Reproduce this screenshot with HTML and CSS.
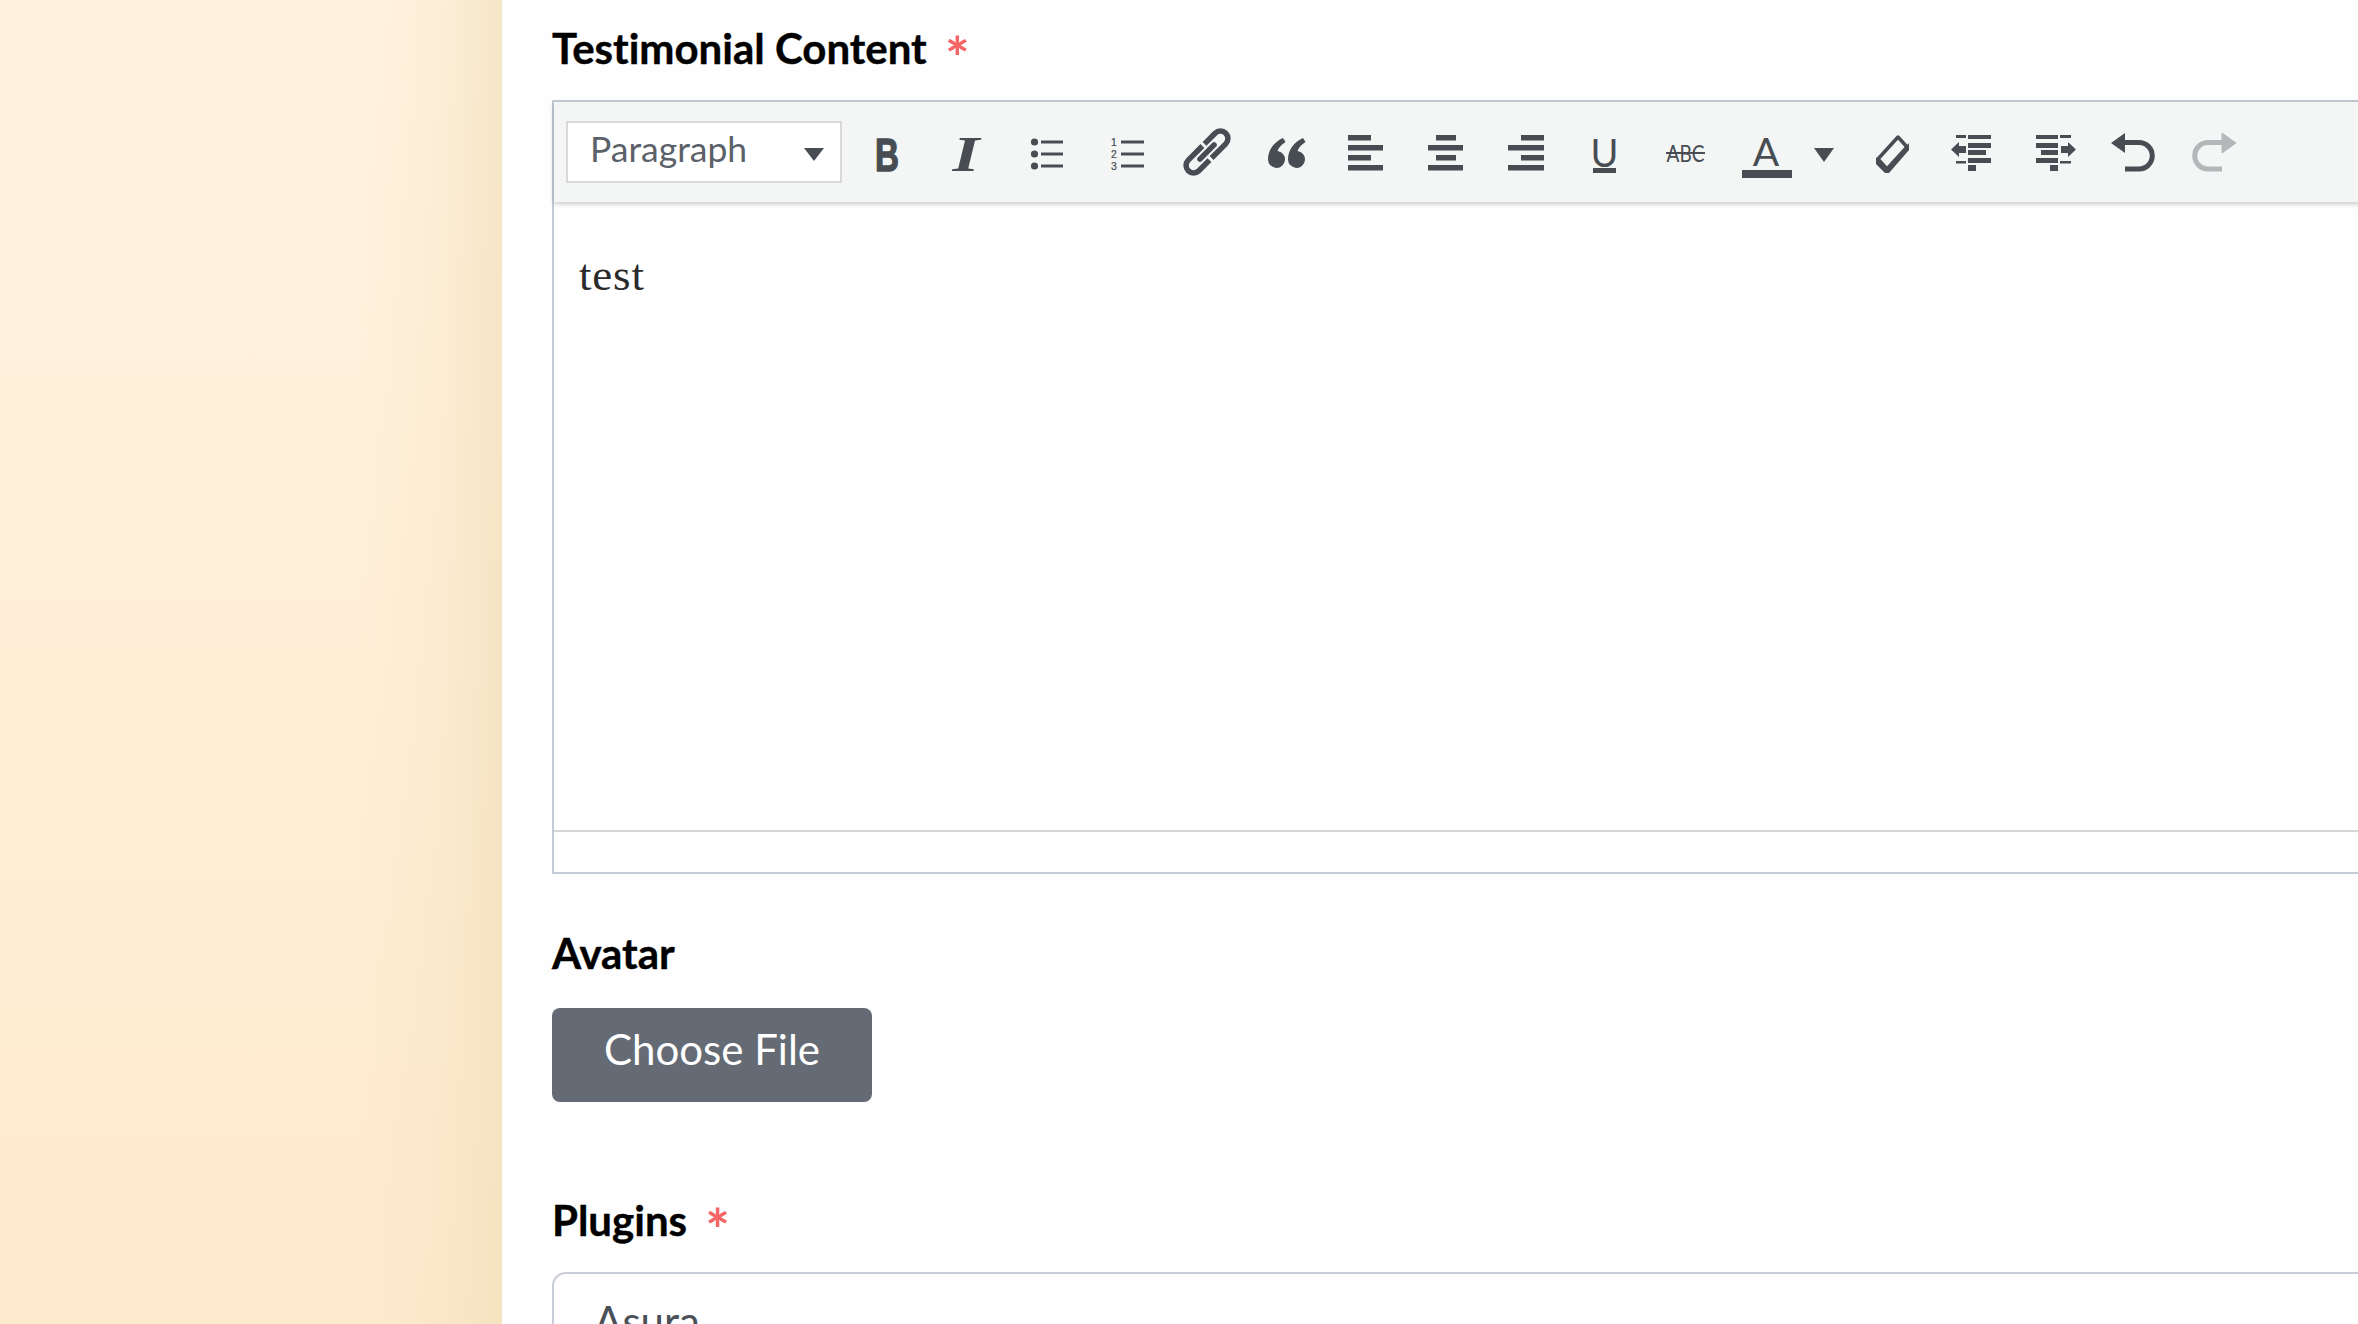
FILE: index.html
```html
<!DOCTYPE html>
<html>
<head>
    <meta charset="utf-8" />

    <title>Testimonial</title>

    <link rel="stylesheet" href="styles.css">
</head>
<body>
    <aside class="sidebar"></aside>

    <main class="content">
        <form class="form">
            <div class="field field-content">
                <label class="label">Testimonial Content <span class="req">*</span></label>

                <div class="editor">
                    <div class="toolbar">
                        <div class="format-select">
                            <span class="format-name">Paragraph</span>
                            <i class="caret"></i>
                        </div>

                        <button type="button" class="tool">
                            <svg viewBox="0 0 80 60"><text class="ico-b" x="40" y="49" text-anchor="middle" textLength="24" lengthAdjust="spacingAndGlyphs">B</text></svg>
                        </button>
                        <button type="button" class="tool">
                            <svg viewBox="0 0 80 60"><text class="ico-i" x="39" y="49" text-anchor="middle" textLength="27" lengthAdjust="spacingAndGlyphs">I</text></svg>
                        </button>
                        <button type="button" class="tool">
                            <svg viewBox="0 0 80 60">
                                <circle cx="27.5" cy="20" r="3.6"/><circle cx="27.5" cy="32" r="3.6"/><circle cx="27.5" cy="44" r="3.6"/>
                                <rect x="34" y="18.5" width="22" height="3"/><rect x="34" y="30.5" width="22" height="3"/><rect x="34" y="42.5" width="22" height="3"/>
                            </svg>
                        </button>
                        <button type="button" class="tool">
                            <svg viewBox="0 0 80 60">
                                <text class="ico-num" x="27" y="24" text-anchor="middle">1</text><text class="ico-num" x="27" y="36" text-anchor="middle">2</text><text class="ico-num" x="27" y="48" text-anchor="middle">3</text>
                                <rect x="34" y="18.5" width="23" height="3"/><rect x="34" y="30.5" width="23" height="3"/><rect x="34" y="42.5" width="23" height="3"/>
                            </svg>
                        </button>
                        <button type="button" class="tool">
                            <svg viewBox="0 0 80 60">
                                <g transform="rotate(-45 40 30)" class="line line-link">
                                    <path d="M41 22.5H21a7.5 7.5 0 0 0 0 15H36"/>
                                    <path d="M39 37.5H59a7.5 7.5 0 0 0 0-15H44"/>
                                    <path d="M30 30H50" stroke-linecap="round"/>
                                </g>
                            </svg>
                        </button>
                        <button type="button" class="tool">
                            <svg viewBox="0 0 80 60">
                                <path d="M36 16l2.5 4C34 23 31.500 26 30.500 29A8.500 8.500 0 1 1 21 37.500C21 28 27 20 36 16z"/>
                                <path d="M56 16l2.500 4C54 23 51.500 26 50.500 29A8.500 8.500 0 1 1 41 37.500C41 28 47 20 56 16z"/>
                            </svg>
                        </button>
                        <button type="button" class="tool">
                            <svg viewBox="0 0 80 60">
                                <rect x="21" y="13" width="23" height="5.500"/><rect x="21" y="23" width="35" height="5.500"/><rect x="21" y="33" width="23" height="5.500"/><rect x="21" y="43" width="35" height="5.500"/>
                            </svg>
                        </button>
                        <button type="button" class="tool">
                            <svg viewBox="0 0 80 60">
                                <rect x="29" y="13" width="20" height="5.500"/><rect x="21" y="23" width="35" height="5.500"/><rect x="29" y="33" width="20" height="5.500"/><rect x="21" y="43" width="35" height="5.500"/>
                            </svg>
                        </button>
                        <button type="button" class="tool">
                            <svg viewBox="0 0 80 60">
                                <rect x="34" y="13" width="23" height="5.500"/><rect x="21" y="23" width="36" height="5.500"/><rect x="34" y="33" width="23" height="5.500"/><rect x="21" y="43" width="36" height="5.500"/>
                            </svg>
                        </button>
                        <button type="button" class="tool">
                            <svg viewBox="0 0 80 60">
                                <text class="ico-u" x="37.500" y="45" text-anchor="middle">U</text>
                                <rect x="26" y="46" width="23" height="5"/>
                            </svg>
                        </button>
                        <button type="button" class="tool">
                            <svg viewBox="0 0 80 60">
                                <text class="ico-abc" x="38.500" y="40" text-anchor="middle" textLength="38" lengthAdjust="spacingAndGlyphs">ABC</text>
                                <rect x="19" y="30" width="39" height="2"/>
                            </svg>
                        </button>
                        <button type="button" class="tool">
                            <svg viewBox="0 0 80 60">
                                <text class="ico-a" x="39" y="44" text-anchor="middle">A</text>
                                <rect x="15" y="48" width="50" height="8"/>
                            </svg>
                        </button>
                        <button type="button" class="tool tool-caret">
                            <svg viewBox="0 0 45 60"><path d="M7 26H27L17 40z"/></svg>
                        </button>
                        <button type="button" class="tool">
                            <svg viewBox="0 0 80 60">
                                <path class="eraser" d="M46 15L55 25 35 47 26 37z"/>
                                <path d="M24 35l0 7 9 9 4 0 20-23 0-7-23 26z"/>
                            </svg>
                        </button>
                        <button type="button" class="tool">
                            <svg viewBox="0 0 80 60">
                                <rect x="24" y="13" width="10" height="3"/><rect x="36" y="13" width="23" height="4"/><rect x="36" y="21" width="23" height="5"/><rect x="36" y="28" width="18" height="5"/><rect x="36" y="36" width="23" height="5"/><rect x="24" y="39" width="10" height="2.500"/><rect x="36" y="43" width="8" height="6"/>
                                <path d="M19 27.500L27 20V24H34V31H27V35z"/>
                            </svg>
                        </button>
                        <button type="button" class="tool">
                            <svg viewBox="0 0 80 60">
                                <rect x="24" y="13" width="22" height="4"/><rect x="48" y="13" width="11" height="3"/><rect x="24" y="21" width="22" height="5"/><rect x="29" y="28" width="17" height="5"/><rect x="24" y="36" width="22" height="5"/><rect x="48" y="39" width="11" height="2.500"/><rect x="38" y="43" width="8" height="6"/>
                                <path d="M64 27.500L56 20V24H49V31H56V35z"/>
                            </svg>
                        </button>
                        <button type="button" class="tool">
                            <svg viewBox="0 0 80 60">
                                <path d="M19 21L33 11V31z"/>
                                <path class="line" d="M32 20.500H47a13 13 0 0 1 0 26.500H33"/>
                            </svg>
                        </button>
                        <button type="button" class="tool tool-off">
                            <svg viewBox="0 0 80 60">
                                <path d="M64 21L50 11V31z"/>
                                <path class="line" d="M51 20.500H36a13 13 0 0 0 0 26.500H50"/>
                            </svg>
                        </button>
                    </div>

                    <div class="editor-body">
                        <p>test</p>
                    </div>
                    <div class="statusbar"></div>
                </div>
            </div>

            <div class="field field-avatar">
                <label class="label">Avatar</label>
                <button type="button" class="file-btn">Choose File</button>
            </div>

            <div class="field field-plugins">
                <label class="label">Plugins <span class="req">*</span></label>
                <div class="picker">Asura</div>
            </div>
        </form>
    </main>
</body>
</html>
```

FILE: styles.css
```css
* {
    box-sizing: border-box;
}

html, body {
    margin: 0;
    padding: 0;
    height: 100%;
}

body {
    display: flex;
    height: 1324px;
    overflow: hidden;
    background: #ffffff;
    color: #000000;
    font-family: Lato, "Open Sans", sans-serif;
    font-variant-ligatures: none;
}

.sidebar {
    flex: 0 0 502px;
    background:
        linear-gradient(to right, rgba(238, 220, 180, 0) 72%, rgba(238, 220, 180, 0.2) 88%, rgba(238, 220, 180, 0.55) 100%),
        linear-gradient(to bottom, #fff3e0, #feeacd);
}

.content {
    flex: 1;
    min-width: 0;
    overflow: hidden;
    padding-left: 50px;
    background: #fefefe;
}

.form {
    width: 2000px;
}

.field-content {
    padding-top: 24px;
}

.field-avatar {
    padding-top: 55px;
}

.field-plugins {
    padding-top: 94px;
}

.label {
    display: block;
    height: 48px;
    font-size: 42px;
    line-height: 48px;
    font-weight: 700;
    -webkit-text-stroke: 0.4px #000000;
}

.req {
    margin-left: 8px;
    color: #f56565;
    font-size: 58px;
    line-height: 0;
    vertical-align: -15px;
    -webkit-text-stroke: 0;
}

.editor {
    margin-top: 28px;
    border: 2px solid #c5ccd6;
    border-right: 0;
}

.toolbar {
    position: relative;
    display: flex;
    align-items: center;
    height: 100px;
    padding-left: 12px;
    background: #f4f6f6;
    box-shadow: 0 2px 5px rgba(0, 0, 0, 0.22);
}

.format-select {
    display: flex;
    align-items: center;
    justify-content: space-between;
    width: 276px;
    height: 62px;
    margin-right: 5px;
    padding: 0 16px 0 22px;
    background: #ffffff;
    border: 2px solid #d9d9d9;
    color: #5b6169;
    font-size: 35.5px;
}

.format-name {
    margin-bottom: 7px;
}

.caret {
    border-left: 10px solid transparent;
    border-right: 10px solid transparent;
    border-top: 13px solid #474d53;
    margin-top: 4px;
}

.tool {
    flex: 0 0 80px;
    width: 80px;
    height: 60px;
    padding: 0;
    background: none;
    border: 0;
    fill: #474d53;
    stroke: none;
}

.tool-caret {
    flex-basis: 45px;
    width: 45px;
}

.tool-off {
    fill: #b3b7b9;
    stroke: #b3b7b9;
}

.tool svg {
    display: block;
    width: 100%;
    height: 100%;
}

.line {
    fill: none;
    stroke: #474d53;
    stroke-width: 5;
}

.line-link {
    stroke-width: 5.5;
}

.tool-off .line {
    stroke: #b3b7b9;
}

.eraser {
    fill: none;
    stroke: #474d53;
    stroke-width: 3.5;
    stroke-linejoin: round;
}

.ico-b {
    font-family: "Liberation Sans", sans-serif;
    font-weight: 700;
    font-size: 46px;
    stroke: #474d53;
    stroke-width: 1.4;
}

.ico-i {
    font-family: "Liberation Serif", serif;
    font-weight: 700;
    font-style: italic;
    font-size: 50px;
}

.ico-num {
    font-family: "Liberation Sans", sans-serif;
    font-size: 10.4px;
    stroke: #474d53;
    stroke-width: 0.2;
}

.ico-u {
    font-family: Lato, sans-serif;
    font-size: 38px;
}

.ico-abc {
    font-family: Lato, sans-serif;
    font-size: 23px;
}

.ico-a {
    font-family: Lato, sans-serif;
    font-size: 39px;
}

.editor-body {
    height: 630px;
    padding: 45px 25px;
    background: #ffffff;
    border-bottom: 2px solid #d6d6d6;
    color: #2a2a2a;
    font-family: "Liberation Serif", serif;
    font-size: 45px;
    letter-spacing: 0.8px;
}

.editor-body p {
    margin: 0;
    line-height: 56px;
}

.statusbar {
    height: 40px;
    background: #ffffff;
}

.file-btn {
    display: block;
    width: 320px;
    height: 94px;
    margin-top: 31px;
    padding: 0 0 12px;
    background: #656b75;
    border: 0;
    border-radius: 8px;
    color: #ffffff;
    font-family: inherit;
    font-size: 42px;
    font-variant-ligatures: none;
    font-weight: 400;
}

.picker {
    height: 120px;
    margin-top: 28px;
    padding: 22px 40px;
    background: #ffffff;
    border: 2px solid #c8cdd8;
    border-radius: 14px;
    color: #4a5058;
    font-size: 42px;
}
```
